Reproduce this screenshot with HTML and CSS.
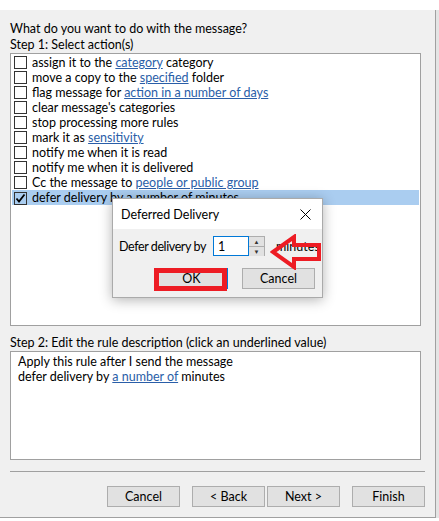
FILE: index.html
```html
<!DOCTYPE html>
<html>
<head>
  <meta charset="UTF-8">
  <title>Rules Wizard</title>
  <link rel="stylesheet" href="styles.css">
</head>
<body>
<div class="screen">
  <div class="window">
    <p class="prompt">What do you want to do with the message?</p>
    <p class="label">Step 1: Select action(s)</p>
    <div class="listbox">
      <ul class="actions">
        <li><span class="box"></span>assign it to the <a href="#">category</a> category</li>
        <li><span class="box"></span>move a copy to the <a href="#">specified</a> folder</li>
        <li><span class="box"></span>flag message for <a href="#">action in a number of days</a></li>
        <li><span class="box"></span>clear message's categories</li>
        <li><span class="box"></span>stop processing more rules</li>
        <li><span class="box"></span>mark it as <a href="#">sensitivity</a></li>
        <li><span class="box"></span>notify me when it is read</li>
        <li><span class="box"></span>notify me when it is delivered</li>
        <li><span class="box"></span>Cc the message to <a href="#">people or public group</a></li>
        <li class="selected"><span class="box"><svg width="11" height="11" viewBox="0 0 11 11"><path d="M1.5 5.5 L4 8.5 L9.5 1.5" fill="none" stroke="#000" stroke-width="1.8"/></svg></span>defer delivery by a number of minutes</li>
      </ul>

      <!-- the small prompt that pops up over the list -->
      <div class="popup">
        <div class="popupTitle">
          <span>Deferred Delivery</span>
          <svg class="close" width="11" height="11" viewBox="0 0 11 11"><path d="M0.5 0.5 L10.5 10.5 M10.5 0.5 L0.5 10.5" stroke="#000" stroke-width="1"/></svg>
        </div>
        <div class="popupBody">
          <div class="deferRow">
            <span class="deferLabel">Defer delivery by</span>
            <div class="spin">
              <span class="spinValue">1</span>
              <div class="spinArrows">
                <span>&#9650;</span>
                <span>&#9660;</span>
              </div>
            </div>
            <span class="unit">minutes</span>
            <svg class="arrow" width="52" height="36" viewBox="0 0 52 36">
              <polygon points="3,18 24,3 24,11 49,11 49,25 24,25 24,33" fill="none" stroke="#ed1c24" stroke-width="4"/>
            </svg>
          </div>
          <div class="popupButtons">
            <button class="btn default">OK<span class="mark"></span></button>
            <button class="btn">Cancel</button>
          </div>
        </div>
      </div>
    </div>

    <p class="label step2">Step 2: Edit the rule description (click an underlined value)</p>
    <div class="desc">
      <p>Apply this rule after I send the message</p>
      <p>defer delivery by <a href="#">a number of</a> minutes</p>
    </div>

    <hr class="sep">

    <div class="buttons">
      <button class="btn wide">Cancel</button>
      <div class="pair">
        <button class="btn wide">&lt; Back</button>
        <button class="btn wide">Next &gt;</button>
      </div>
      <button class="btn wide">Finish</button>
    </div>
  </div>
  <div class="edge"></div>
</div>
</body>
</html>
```

FILE: styles.css
```css
body {
  margin: 0;
  background-color: #fff;
  font-family: 'Segoe UI', Lato, sans-serif;
  font-size: 12.5px;
  line-height: 15px;
  color: #000;
}
p {
  margin: 0;
}
a {
  color: #2a5ea8;
  text-decoration: underline;
}
.screen {
  display: flex;
  padding-top: 10px;
}
.window {
  width: 425px;
  padding: 11px 0 10px 10px;
  background-color: #f0f0f0;
  border-right: 1px solid #a0a0a0;
  border-bottom: 1px solid #a0a0a0;
}
.edge {
  flex: 1;
  background-color: #e4e4e4;
}
.label {
  margin-top: 1px;
}
.listbox {
  position: relative;
  box-sizing: border-box;
  width: 411px;
  height: 273px;
  margin-top: 1px;
  padding: 1px;
  background-color: #fff;
  border: 1px solid #a0a0a0;
}
.actions {
  margin: 0;
  padding: 0;
  list-style-type: none;
}
.actions li {
  height: 15px;
  padding-left: 2px;
  white-space: nowrap;
}
.actions li.selected {
  background-color: #aacdf0;
}
.box {
  display: inline-flex;
  align-items: center;
  justify-content: center;
  box-sizing: border-box;
  width: 13px;
  height: 13px;
  margin-right: 5px;
  vertical-align: -2px;
  background-color: #fff;
  border: 1px solid #333;
}
.selected .box {
  background-color: transparent;
}

/* popup */
.popup {
  position: absolute;
  left: 101px;
  top: 144px;
  width: 209px;
  background-color: #f0f0f0;
  border: 1px solid #aaa;
  box-shadow: 0 2px 12px rgba(0,0,0,.3);
}
.popupTitle {
  display: flex;
  align-items: center;
  justify-content: space-between;
  height: 30px;
  padding: 0 11px 0 8px;
  background-color: #fff;
}
.popupBody {
  padding: 7px 7px 8px 6px;
}
.deferRow {
  position: relative;
  display: flex;
  align-items: center;
  height: 20px;
  white-space: nowrap;
}
.deferLabel {
  flex: none;
  width: 94px;
  letter-spacing: -0.4px;
}
.spin {
  display: flex;
  flex: none;
  height: 20px;
}
.spinValue {
  box-sizing: border-box;
  width: 36px;
  height: 20px;
  padding: 2px 0 0 4px;
  background-color: #fff;
  border: 1px solid #0078d7;
}
.spinArrows {
  display: flex;
  flex-direction: column;
  box-sizing: border-box;
  width: 16px;
  height: 20px;
  border: 1px solid #adadad;
  border-left: none;
}
.spinArrows span {
  flex: 1;
  font-size: 6px;
  line-height: 9px;
  text-align: center;
  background-color: #e1e1e1;
  color: #333;
}
.spinArrows span + span {
  border-top: 1px solid #adadad;
}
.unit {
  flex: none;
  margin-left: 11px;
}
.arrow {
  position: absolute;
  left: 151px;
  top: -2px;
}
.popupButtons {
  display: flex;
  justify-content: flex-end;
  gap: 14px;
  margin-top: 12px;
}
.btn {
  box-sizing: border-box;
  height: 21px;
  padding: 0;
  font-family: inherit;
  font-size: 12.5px;
  color: #000;
  background-color: #e1e1e1;
  border: 1px solid #adadad;
}
.popupButtons .btn {
  width: 73px;
}
.popupButtons .default {
  position: relative;
  border-color: #0078d7;
}
.mark {
  position: absolute;
  left: -2px;
  top: -1px;
  right: 0;
  bottom: -3px;
  border: 5px solid #ed1c24;
}

/* step 2 */
.step2 {
  margin-top: 9px;
}
.desc {
  box-sizing: border-box;
  width: 411px;
  height: 109px;
  margin-top: 1px;
  padding: 2px 7px;
  background-color: #fff;
  border: 1px solid #a0a0a0;
}
.sep {
  width: 415px;
  margin: 11px 0 0 0;
  border: none;
  border-top: 1px solid #a0a0a0;
}
.buttons {
  display: flex;
  justify-content: flex-end;
  gap: 12px;
  width: 415px;
  margin-top: 14px;
}
.pair {
  display: flex;
  gap: 2px;
}
.btn.wide {
  width: 73px;
}
```
